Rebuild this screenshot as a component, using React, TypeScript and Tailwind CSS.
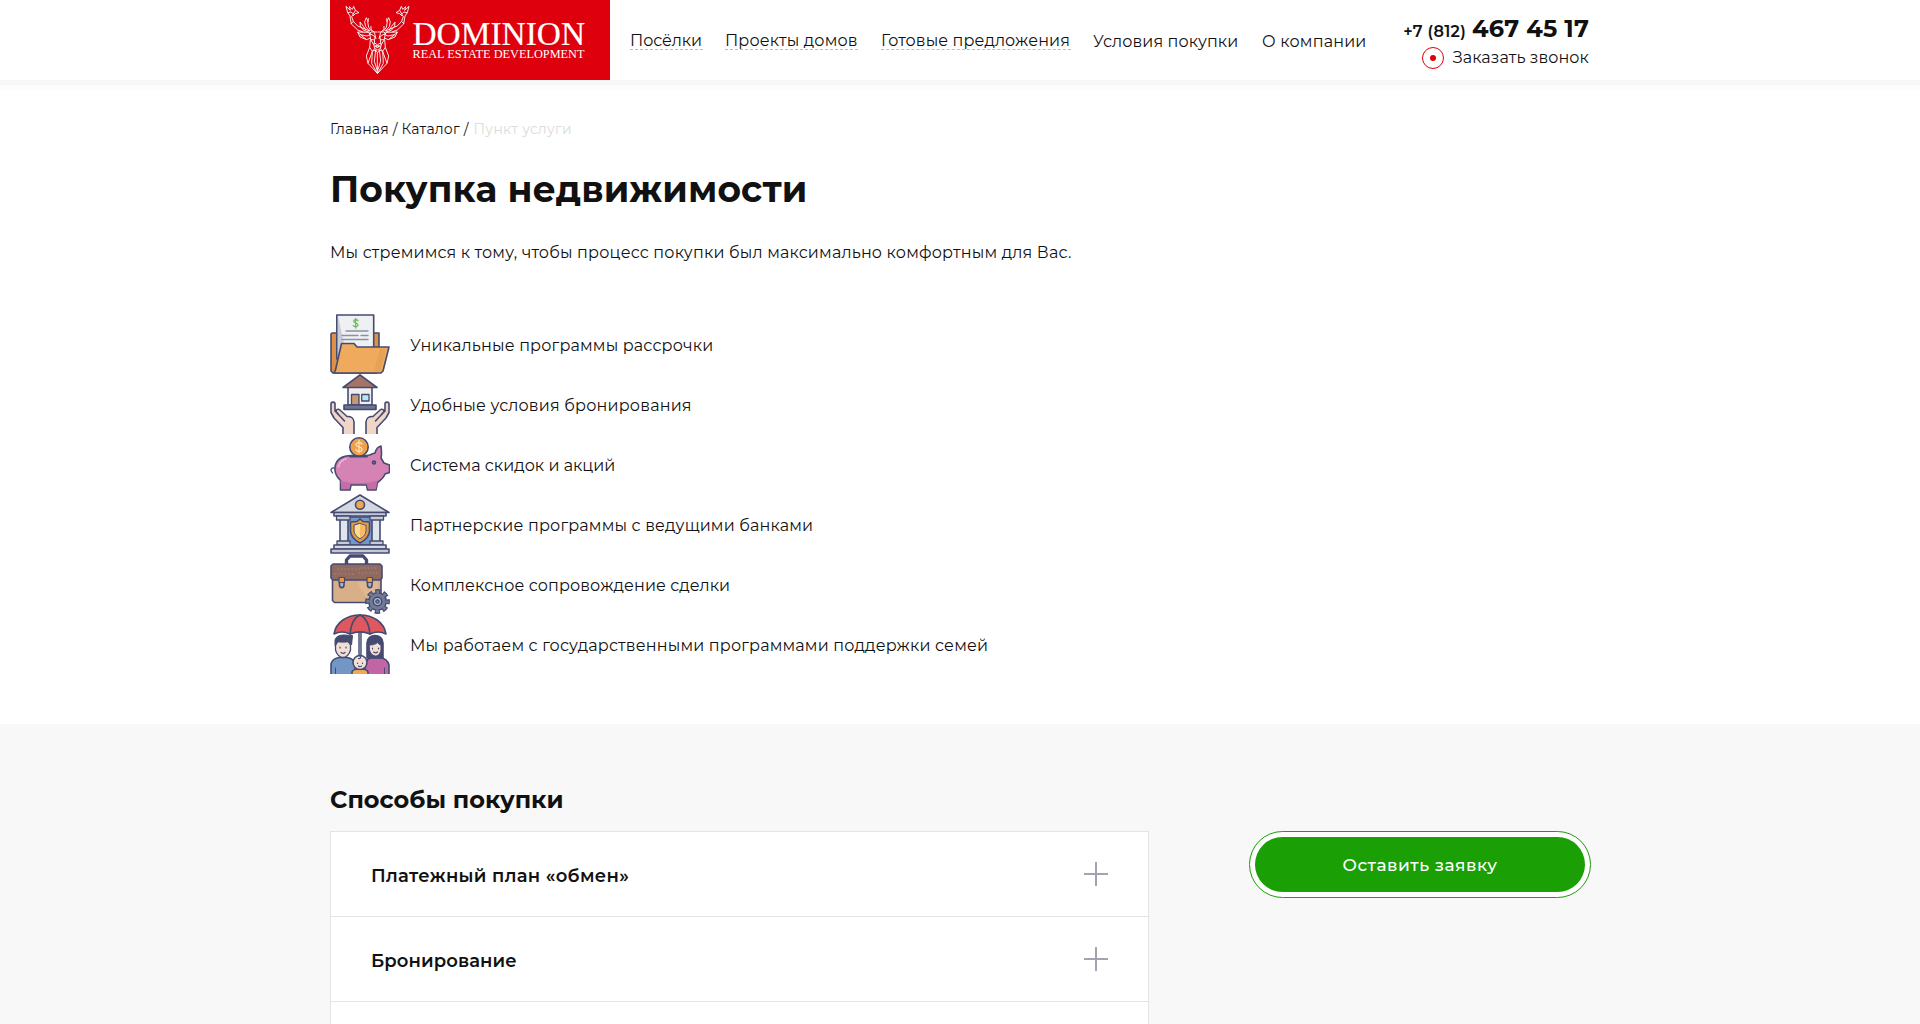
import type { ReactNode } from "react";

const NAVY = "#454b70";

function Logo() {
  const half = (
    <g>
      <path d="M33 19L38 38L45 48L49 72L68 90L84 96M38 38L48 36L55 42L50 50L55 64L68 78L88 86M33 19L46 31L43 20L52 28L56 19L61 31L72 38L61 41L54 48M48 72L55 64M61 31L55 42" />
      <path d="M94 53L89 66L92 80L104 93M101 55L98 66L101 82L110 94M94 53L100 66M75 66L76 78L86 91L104 97M75 66L86 80L92 90M88 86L104 93M108 78L108 88L117 96" />
      <path d="M68 96L100 97L106 104L96 108L76 104ZM68 96L75 111L95 119L107 114M76 104L95 119" />
      <path d="M127 96H108L104 100L107 118L117 136L119 146L127 149M118 97L123 117M104 100L120 110L117 136M107 118L119 120M117 128L127 134M119 140H127" />
      <path d="M106 119L104 142L94 168L99 190L127 220M104 142L112 154L99 190M112 154L122 150L127 158M112 154L110 190L127 220M119 146L112 154M122 150L118 184L127 212" />
    </g>
  );
  return (
    <svg width="280" height="80" viewBox="0 0 280 80" className="block shrink-0 bg-[#de000c]">
      <g transform="translate(5 0) scale(.3333)" fill="none" stroke="#fff" strokeWidth="2.7" strokeLinejoin="round">
        {half}
        <g transform="translate(255 0) scale(-1 1)">{half}</g>
        <path d="M121 137H133L127 144ZM127 158V220" />
      </g>
      <g fill="#fff" fontFamily="'Liberation Serif', serif">
        <text x="82.5" y="44.700" fontSize="33.500" stroke="#fff" strokeWidth=".2" textLength="172.500" lengthAdjust="spacingAndGlyphs">DOMINION</text>
        <text x="82.5" y="58" fontSize="12" textLength="172" lengthAdjust="spacingAndGlyphs">REAL ESTATE DEVELOPMENT</text>
      </g>
    </svg>
  );
}

function Icon({ children }: { children: ReactNode }) {
  return (
    <svg width="60" height="60" viewBox="0 0 60 60" className="block shrink-0" stroke={NAVY} strokeWidth="1.6" strokeLinejoin="round" strokeLinecap="round" fill="none">
      {children}
    </svg>
  );
}

const FolderIcon = () => (
  <Icon>
    <path d="M2 19H49V57L46 59H3L1 57V20Z" fill="#dd9046" />
    <path d="M6.8 1H43.7V45H6.8Z" fill="#eef0f3" />
    <path d="M8 2L14 30L8 44Z" fill="#c9ccd6" stroke="none" />
    <path d="M16 17H38M12 21.500H28M31 21.500H38M12 25.500H38" stroke="#8b90a5" strokeWidth="1.4" />
    <path d="M28 6.500C26.500 5 23.500 5.500 23.700 7.500C24 9.500 28 8.500 28 11C28 13 24.500 13.200 23.200 11.600M25.700 4.500V14" stroke="#6dbb5c" strokeWidth="1.3" />
    <path d="M11.500 29.500H24L27 33H59L53 57L51 59H4L5.500 56Z" fill="#efaa5d" />
    <path d="M56 35L50 57H44L50 35Z" fill="#e9a253" stroke="none" />
  </Icon>
);

const Hand = () => (
  <>
    <path d="M13 61V53.500L4 44L1 38.500V30C1 27.500 5 27.500 5 30V37L8 40L6 37.500C6 35 9 34.500 10.500 36.500L17 42.500C21 42 24 44.500 24 48V61Z" fill="#efd6c9" />
    <path d="M8 40L14.500 47" />
  </>
);

const HouseIcon = () => (
  <Icon>
    <path d="M18 12H42V31H18Z" fill="#eceef2" />
    <path d="M30 .8L47 13.500H13Z" fill="#a57468" />
    <path d="M21.500 31V20.500H29V31Z" fill="#c99873" strokeWidth="1.3" />
    <path d="M31.700 20.500H39V27H31.700Z" fill="#b8e6f6" strokeWidth="1.3" />
    <path d="M14 31H46V35.500H14Z" fill="#6d7391" />
    <Hand />
    <g transform="translate(60 0) scale(-1 1)">
      <Hand />
    </g>
  </Icon>
);

const PigIcon = () => (
  <Icon>
    <path d="M4 34C2 33.500 .8 35 1 36.500L2.500 39" strokeWidth="1.300" />
    <path d="M45 19C46 15 49 12.500 51 12C51.500 16 52 20 51 24L54 29L59.500 31V38.500L55 40C53.500 44 51 46 47.500 48.500L46 56H37.500L36.500 51H21L20 56H10.500V46.500C6.500 43 4.500 38 5 33C6 25 13 21.500 21 21.500H37C40 21.500 42 19.500 45 19Z" fill="#d583b4" />
    <path d="M10.500 46.500C20 50 36 50 47.500 46.500L46 55H38L37 50H20L19 55H11.500Z" fill="#c46ea5" stroke="none" />
    <path d="M8.500 33C9 29 12 26 16 25" stroke="#f3b7d5" strokeDasharray="2 1.500" />
    <circle cx="44" cy="28.500" r="1.500" fill="#7c6b94" />
    <circle cx="29" cy="13" r="9.200" fill="#efa04b" />
    <path d="M32 10C30 7.500 26 8.300 26 11C26.300 13.800 32 12 32 15.500C31.500 18.500 27 18 25.800 15.500M29 6.500V19" stroke="#ffe0b0" strokeWidth="1.3" />
    <path d="M20 22.500H37" strokeWidth="1.800" />
  </Icon>
);

const BankIcon = () => (
  <Icon>
    <path d="M11 23H49V51H11Z" fill="#7197cb" />
    <path d="M30 1L59 18.500H1Z" fill="#d3d7e1" />
    <path d="M4 18.500H56V22H4Z" fill="#c6cbd8" />
    <circle cx="30" cy="10.800" r="4.500" fill="#f1a54e" />
    <path d="M10 24H18V50H10ZM42 24H50V50H42Z" fill="#e0e4ec" />
    <path d="M6.500 22H20V26H6.500ZM40 22H53.500V26H40ZM7 47H20V51H7ZM40 47H53V51H40Z" fill="#c6cbd8" strokeWidth="1.300" />
    <path d="M30 25L33 27.500L39.500 28V37C39 43 35 46.500 30 49C25 46.500 21 43 20.500 37V28L27 27.500Z" fill="#e49a40" />
    <path d="M30 29.500L36 31.500V37C35.500 41 33 43 30 44.800C27 43 24.500 41 24 37V31.500Z" fill="#ffdc8f" strokeWidth="1" />
    <path d="M30 30V44L35 38V32Z" fill="#f6ba68" stroke="none" />
    <path d="M4 51H56V55H4Z" fill="#d6dae3" />
    <path d="M1 55H59V59H1Z" fill="#c2c8d5" />
  </Icon>
);

const BriefcaseIcon = () => (
  <Icon>
    <path d="M16.500 10V6L20 2H33L36.500 6V10" strokeWidth="3.400" />
    <path d="M2.500 24H51V48.500H4.500L2.500 46.500Z" fill="#d8af88" />
    <path d="M28 28C31 40 38 45 48 48V27Z" fill="#dfb892" stroke="none" />
    <path d="M3 10H50L52 12V24L50 26H3L1 24V12Z" fill="#8f6a60" />
    <path d="M8 15H30M5 20H25M31 14H46M29 19H48" stroke="#b78b76" strokeWidth="1" strokeDasharray=".5 3" />
    <path d="M9.500 28V31C9.500 34.500 14 34.500 14 31V28ZM37.500 28V31C37.500 34.500 42 34.500 42 31V28Z" fill="#aeb5c8" />
    <path d="M9 23.500H14.500V28.500H9ZM37 23.500H42.500V28.500H37Z" fill="#ee9a3c" strokeWidth="1.200" />
    <circle cx="47.500" cy="47.500" r="10.200" stroke={NAVY} strokeWidth="4.400" strokeDasharray="5.200 2.811" strokeDashoffset="2.600" strokeLinecap="butt" />
    <circle cx="47.500" cy="47.500" r="8.800" fill="#727b9a" />
    <circle cx="47.500" cy="47.500" r="9.600" stroke="#727b9a" strokeWidth="3" strokeDasharray="2.800 4.740" strokeDashoffset="1.400" strokeLinecap="butt" />
    <circle cx="47.500" cy="47.500" r="4.200" fill="#b4bccd" />
    <circle cx="47.500" cy="47.500" r="1.700" fill="#7d86a2" strokeWidth="1.200" />
  </Icon>
);

const FamilyIcon = () => (
  <Icon>
    <path d="M30 18V42" strokeWidth="3.400" />
    <path d="M30 18V42" stroke="#8a91ad" strokeWidth="1.200" />
    <path d="M4 20C6 8 17 1 30 1C43 1 54 8 56 20C51 17.500 45 17.500 40 20C34 17.500 26 17.500 20 20C15 17.500 9 17.500 4 20Z" fill="#df5860" />
    <path d="M20 20C21 10 25 3 30 1C35 3 39 10 40 20" />
    <path d="M1 61V50C2 45 6 44 9 43.500H17C21 44 24 46 25 50V61Z" fill="#7297c7" />
    <path d="M35 61V50C36 46 39 44 42 43.500H49C54 44 58 46 59 51V61Z" fill="#c165a4" />
    <path d="M37 44V29C37 19 53 19 53 29V44Z" fill={NAVY} />
    <path d="M39.500 31C44 31 46 30 47.500 28.500C48.500 30 50 31 51 31V36C50 40.500 47.500 42 45.300 42C42 41.500 40 39 39.500 36Z" fill="#f3ded6" strokeWidth="1" />
    <path d="M5.500 31.500C5.500 30.500 7 29 8 27.500H18C19 29 20.500 30 20.500 31.500V36C19.500 40.500 16 43.500 13 43.500C10 43.500 6.500 40.500 5.500 36Z" fill="#f3ded6" strokeWidth="1.300" />
    <path d="M5 31V26C6 22 10 21 14 21L22.500 21.500L21.500 31L18 27.500C14 28.500 10 28 8 27.500Z" fill={NAVY} strokeWidth="1" />
    <path d="M10 33V34M16 33V34M11 38.500C12.500 39.500 14 39.500 15 38.500M42.500 34V35M48.500 34V35M43.700 38C45 39 46.500 39 47.500 38" strokeWidth="1.200" />
    <path d="M5.500 54V60M54.500 54V60" strokeWidth="1" />
    <path d="M22 61V58C23 54 37 54 38 58V61Z" fill="#f0ab51" />
    <circle cx="30" cy="48.500" r="7" fill="#f5e0d8" />
    <path d="M27.500 49V49.500M32.500 49V49.500M28.500 52C29.500 53 30.800 53 31.600 52M30 42C31.500 43.500 30 45 28.500 44.500" strokeWidth="1.200" />
  </Icon>
);

const benefits = [
  { icon: <FolderIcon />, text: "Уникальные программы рассрочки", cls: "tracking-[0.18px]" },
  { icon: <HouseIcon />, text: "Удобные условия бронирования", cls: "tracking-[0.19px]" },
  { icon: <PigIcon />, text: "Система скидок и акций", cls: "tracking-[0.03px]" },
  { icon: <BankIcon />, text: "Партнерские программы с ведущими банками", cls: "tracking-[0.18px]" },
  { icon: <BriefcaseIcon />, text: "Комплексное сопровождение сделки", cls: "tracking-[0.11px]" },
  { icon: <FamilyIcon />, text: "Мы работаем с государственными программами поддержки семей", cls: "tracking-[0.18px]" },
];

const methods = [
  { title: "Платежный план «обмен»", cls: "tracking-[0.31px]" },
  { title: "Бронирование", cls: "tracking-[0.08px]" },
  { title: "", cls: "" },
];

const dropdown = "block h-5 border-b border-dashed border-[#bdbdbd] pt-px leading-[19px] whitespace-nowrap";

export default function App() {
  return (
    <div className="h-[1024px] overflow-hidden bg-white font-[Montserrat,Inter,sans-serif] text-base text-[#111]">
      <header className="h-[80px] bg-white shadow-[0_5px_0_#f7f7f7,0_10px_0_#fcfcfc]">
        <div className="mx-auto flex w-[1260px] items-start">
          <Logo />
          <nav className="ml-5 flex items-start pt-[30px]">
            <a className={`${dropdown} w-[73px] tracking-[-0.05px]`}>Посёлки</a>
            <a className={`${dropdown} ml-[22px] w-[133px] tracking-[0.14px]`}>Проекты домов</a>
            <a className={`${dropdown} ml-[23px] w-[190px] tracking-[0.1px]`}>Готовые предложения</a>
            <a className="ml-[22px] w-[146px] whitespace-nowrap pt-0.5 leading-[19px] tracking-[0.12px]">Условия покупки</a>
            <a className="ml-[23px] whitespace-nowrap pt-0.5 leading-[19px] tracking-[0.2px]">О компании</a>
          </nav>
          <div className="mr-px ml-auto flex flex-col items-end pt-[13px]">
            <div className="flex items-baseline gap-1.5 leading-8">
              <span className="font-semibold tracking-[0.3px]">+7 (812)</span>
              <span className="text-2xl leading-8 font-bold tracking-[0.18px]">467 45 17</span>
            </div>
            <div className="-mt-px flex items-center gap-[9px] leading-[22px]">
              <span className="flex size-[22px] items-center justify-center rounded-full border border-[#de000c]">
                <span className="size-1.5 rounded-full bg-[#de000c]" />
              </span>
              <span className="tracking-[0.08px]">Заказать звонок</span>
            </div>
          </div>
        </div>
      </header>

      <main className="mx-auto h-[644px] w-[1260px] pt-[38px]">
        <div className="flex gap-[5px] text-sm leading-[22px]">
          <span className="tracking-[0.2px]">Главная / Каталог /</span>
          <span className="tracking-[0.25px] text-[#dcdcdc]">Пункт услуги</span>
        </div>
        <h1 className="mt-[26px] text-4xl leading-[46px] font-bold tracking-[0.12px]">Покупка недвижимости</h1>
        <p className="mt-[29px] leading-6 tracking-[0.185px]">
          Мы стремимся к тому, чтобы процесс покупки был максимально комфортным для Вас.
        </p>
        <ul className="mt-[49px]">
          {benefits.map((b) => (
            <li key={b.text} className="flex h-[60px] items-center gap-5">
              {b.icon}
              <span className={`pt-1 ${b.cls}`}>{b.text}</span>
            </li>
          ))}
        </ul>
      </main>

      <section className="h-[300px] bg-[#f8f8f8] pt-[60px]">
        <div className="mx-auto w-[1260px]">
          <h2 className="mb-4 text-2xl leading-[31px] font-bold">Способы покупки</h2>
          <div className="flex items-start justify-between">
            <div className="w-[819px] border border-b-0 border-[#e4e4e4] bg-white">
              {methods.map((m, i) => (
                <div key={i} className="flex h-[85px] items-center justify-between border-b border-[#e4e4e4] px-10">
                  <h3 className={`pt-1 text-lg font-semibold ${m.cls}`}>{m.title}</h3>
                  <svg width="24" height="24" viewBox="0 0 24 24" className="block" stroke="#a5a3b1" strokeWidth="2">
                    <path d="M0 12H24M12 0V24" />
                  </svg>
                </div>
              ))}
            </div>
            <button className="mr-[-1px] h-[67px] w-[342px] rounded-full border border-[#1a9f05] bg-white p-[5px]">
              <span className="flex h-full items-center justify-center rounded-full bg-[#1a9f05] pt-[3px] text-[17px] font-medium tracking-[0.54px] text-white">
                Оставить заявку
              </span>
            </button>
          </div>
        </div>
      </section>
    </div>
  );
}
